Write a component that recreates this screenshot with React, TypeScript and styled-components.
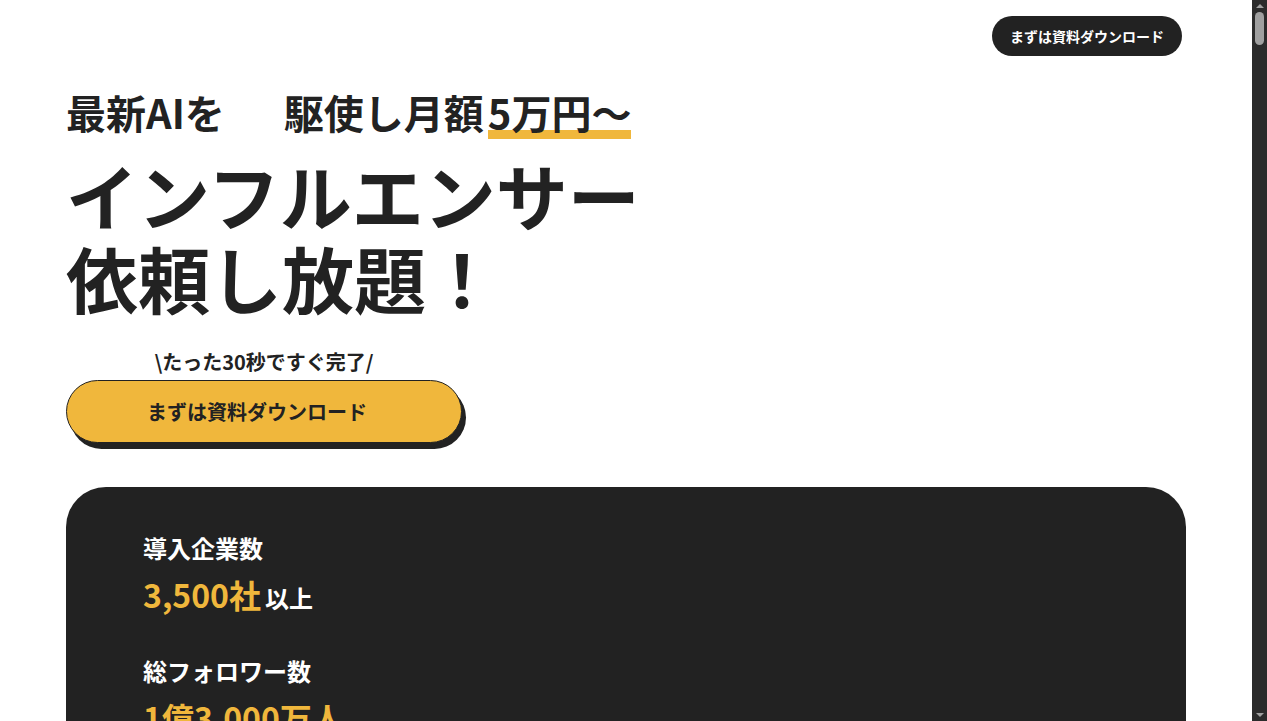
import React from "react";
import styled, { createGlobalStyle } from "styled-components";

const GlobalStyle = createGlobalStyle`
  html {
    background: #fff;
  }
  body {
    margin: 0;
    padding-right: 15px;
    background: #fff;
    color: #222;
    font-family: "Noto Sans CJK JP", "Noto Sans", sans-serif;
  }
`;

// the browser's dark scrollbar seen in the screenshot
const ScrollTrack = styled.div`
  position: fixed;
  top: 0;
  right: 0;
  bottom: 0;
  width: 15px;
  background: #2b2b2b;
  display: flex;
  flex-direction: column;
  align-items: center;
  justify-content: space-between;
  padding: 4px 0;
  box-sizing: border-box;
`;

const ScrollThumb = styled.div`
  width: 9px;
  height: 33px;
  margin-top: 4px;
  border-radius: 5px;
  background: #a0a0a0;
`;

const ScrollTop = styled.div`
  display: flex;
  flex-direction: column;
  align-items: center;
`;

const Arrow = styled.div<{ $down?: boolean }>`
  width: 0;
  height: 0;
  border-left: 4px solid transparent;
  border-right: 4px solid transparent;
  ${(p) =>
    p.$down
      ? "border-top: 4px solid #a0a0a0;"
      : "border-bottom: 4px solid #a0a0a0;"}
`;

const Page = styled.div`
  max-width: 1120px;
  margin: 0 auto;
  padding-top: 16px;
`;

const Header = styled.header`
  display: flex;
  justify-content: flex-end;
  padding-right: 4px;
`;

const HeaderButton = styled.a`
  display: flex;
  align-items: center;
  height: 40px;
  padding: 0 18px;
  border-radius: 20px;
  background: #222;
  color: #fff;
  font-size: 14px;
  font-weight: 700;
  text-decoration: none;
  cursor: pointer;
`;

const Hero = styled.section`
  margin-top: 26px;
`;

const Lead = styled.p`
  margin: 0;
  font-size: 40px;
  font-weight: 700;
  line-height: 60px;
  color: #222;
`;

const Gap = styled.span`
  display: inline-block;
  width: 59px;
`;

const Marked = styled.span`
  position: relative;
  z-index: 0;
  display: inline-block;
  margin-left: 4px;

  &::after {
    content: "";
    position: absolute;
    left: 0;
    right: 0;
    bottom: 3px;
    height: 9px;
    background: #f0b73c;
    z-index: -1;
  }
`;

const Title = styled.h1`
  margin: 10px 0 0;
  font-size: 72px;
  font-weight: 700;
  line-height: 83px;
  color: #222;
`;

const Cta = styled.div`
  display: inline-flex;
  flex-direction: column;
  align-items: center;
  margin-top: 30px;
`;

const Caption = styled.p`
  margin: 0;
  font-size: 20px;
  font-weight: 700;
  line-height: 27px;
  color: #222;
`;

const MainButton = styled.a`
  display: flex;
  align-items: center;
  justify-content: center;
  box-sizing: border-box;
  width: 396px;
  height: 63px;
  margin-top: 5px;
  padding-right: 14px;
  border: 1px solid #222;
  border-radius: 32px;
  background: #f0b73c;
  box-shadow: 4px 6px 0 #222;
  color: #222;
  font-size: 20px;
  font-weight: 700;
  text-decoration: none;
  cursor: pointer;
`;

const StatsCard = styled.section`
  margin-top: 44px;
  padding: 43px 77px 90px;
  border-radius: 40px 40px 0 0;
  background: #222;
  display: flex;
  flex-direction: column;
  gap: 31px;
`;

const Stat = styled.div`
  display: flex;
  flex-direction: column;
`;

const StatLabel = styled.p`
  margin: 0;
  font-size: 24px;
  font-weight: 700;
  line-height: 36px;
  color: #fff;
`;

const StatValue = styled.p`
  margin: 4px 0 0;
  font-size: 32px;
  font-weight: 700;
  line-height: 48px;
  color: #f0b73c;
`;

const StatUnit = styled.span`
  margin-left: 4px;
  font-size: 24px;
  color: #fff;
`;

type StatItem = { label: string; value: string; unit?: string };

const stats: StatItem[] = [
  { label: "導入企業数", value: "3,500社", unit: "以上" },
  { label: "総フォロワー数", value: "1億3,000万人" },
  { label: "登録インフルエンサー数", value: "20,000人", unit: "以上" },
];

export default function App() {
  return (
    <>
      <GlobalStyle />
      <Page>
        <Header>
          <HeaderButton>まずは資料ダウンロード</HeaderButton>
        </Header>
        <Hero>
          <Lead>
            最新AIを<Gap />駆使し月額<Marked>5万円〜</Marked>
          </Lead>
          <Title>
            インフルエンサー
            <br />
            依頼し放題！
          </Title>
          <Cta>
            <Caption>\たった30秒ですぐ完了/</Caption>
            <MainButton>まずは資料ダウンロード</MainButton>
          </Cta>
        </Hero>
        <StatsCard>
          {stats.map((s) => (
            <Stat key={s.label}>
              <StatLabel>{s.label}</StatLabel>
              <StatValue>
                {s.value}
                {s.unit && <StatUnit>{s.unit}</StatUnit>}
              </StatValue>
            </Stat>
          ))}
        </StatsCard>
      </Page>
      <ScrollTrack>
        <ScrollTop>
          <Arrow />
          <ScrollThumb />
        </ScrollTop>
        <Arrow $down />
      </ScrollTrack>
    </>
  );
}
